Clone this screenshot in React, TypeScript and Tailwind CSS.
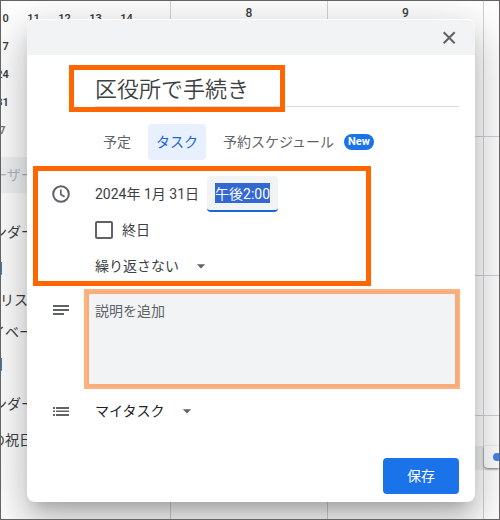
import { useEffect, useRef, useState } from 'react';
import { MdArrowDropDown } from 'react-icons/md';

const miniCalendar = [
  ['10', '11', '12', '13', '14'],
  ['17'],
  ['24'],
  ['31'],
  ['7'],
];

const sidebarItems = [
  { text: 'ンダー', className: '-ml-2 mt-[23px]' },
  { text: '日', className: '-ml-[11px] mt-1' },
  { text: 'リスト', className: '-ml-px' },
  { text: 'イベート', className: '-ml-2.5' },
  { text: '日', className: '-ml-[11px]' },
  { text: 'ンダー', className: '-ml-2 mt-2' },
  { text: 'の祝日', className: '-ml-2.5 mt-1' },
];

const tabs = [
  { id: 'event', label: '予定' },
  { id: 'task', label: 'タスク' },
  { id: 'schedule', label: '予約スケジュール', isNew: true },
];

// Dimmed calendar page behind the dialog
const CalendarBackdrop = () => (
  <div className="absolute inset-0 flex overflow-hidden bg-white">
    <aside className="w-[169px] shrink-0 overflow-hidden whitespace-nowrap">
      <div className="mt-1 -ml-[14px] text-[11px] font-semibold">
        {miniCalendar.map((week, i) => (
          <div key={i} className={`flex h-7 items-center ${i === 4 ? 'text-[#70757a]' : ''}`}>
            {week.map(day => <span key={day} className="w-[31px] shrink-0 text-center">{day}</span>)}
          </div>
        ))}
      </div>
      <div className="mt-3 flex h-9 items-center bg-[#f1f3f4] text-[#b4b6b9]">
        <span className="-ml-2">ーザーを検索</span>
      </div>
      {sidebarItems.map((item, i) => (
        <div key={i} className={`flex h-8 items-center ${item.className}`}>{item.text}</div>
      ))}
    </aside>
    <div className="relative flex flex-1 flex-col">
      <div className="absolute inset-0 flex text-xs font-medium">
        <div className="w-[157px] shrink-0 border-l border-[#d0d2d5] pt-1 text-center leading-4">8</div>
        <div className="w-[156px] shrink-0 border-l border-[#d0d2d5] pt-1 text-center leading-4">9</div>
        <div className="flex-1 border-l border-[#d0d2d5]" />
      </div>
      <div className="h-[136px] border-b border-[#d0d2d5]" />
      <div className="h-[139px] border-b border-[#d0d2d5]" />
      <div className="h-[140px] border-b border-[#d0d2d5]" />
      <div className="mt-[30px] flex h-6 justify-end bg-[#eeeff0]">
        <div className="relative flex h-[22px] w-[15px] items-center rounded-bl bg-white pl-[9px] shadow-sm shadow-black/40">
          <span className="size-2 shrink-0 rounded-full bg-[#4285f4]" />
        </div>
      </div>
    </div>
  </div>
);

const Dropdown = ({ label, options }: { label: string; options: string[] }) => (
  <div className="relative inline-flex items-center">
    <select aria-label={label} className="h-8 cursor-pointer appearance-none bg-transparent pr-8 outline-none">
      {options.map(o => <option key={o}>{o}</option>)}
    </select>
    <MdArrowDropDown className="pointer-events-none absolute right-0 size-5 text-[#5f6368]" />
  </div>
);

export default function App() {
  const [tab, setTab] = useState('task');
  const [title, setTitle] = useState('区役所で手続き');
  const [time, setTime] = useState('午後2:00');
  const [allDay, setAllDay] = useState(false);
  const timeRef = useRef<HTMLInputElement | null>(null);

  useEffect(() => {
    timeRef.current?.focus();
    timeRef.current?.select();
  }, []);

  return (
    <div className="relative flex min-h-screen flex-col overflow-hidden border border-[#666363] font-[Roboto,'Noto_Sans_CJK_JP',sans-serif] text-sm text-[#3c4043]">
      <CalendarBackdrop />

      <div
        role="dialog"
        aria-label="タスクを追加"
        className="relative mt-[18px] mr-6 mb-[17px] ml-[26px] rounded-lg bg-white shadow-[0_24px_38px_3px_rgba(0,0,0,0.14),0_9px_46px_8px_rgba(0,0,0,0.12),0_11px_15px_-7px_rgba(0,0,0,0.2)]"
      >
        <div className="flex h-9 items-center justify-end rounded-t-lg border-t border-white bg-[#f1f3f4] pr-4">
          <button type="button" aria-label="閉じる" className="text-[#5f6368]">
            <svg viewBox="0 0 20 20" className="size-5" fill="none" stroke="currentColor" strokeWidth="2">
              <path d="M4.7 4.2l11 11M15.7 4.2l-11 11" />
            </svg>
          </button>
        </div>

        <div className="relative mt-4 mr-4 ml-[68px]">
          <input
            aria-label="タイトル"
            value={title}
            onChange={e => setTitle(e.target.value)}
            className="block h-9 w-full border-b border-[#dadce0] pb-1 text-[22px] font-[350] outline-none"
          />
          <span className="pointer-events-none absolute -top-1.5 -left-[26px] h-[47px] w-[216px] border-5 border-[#ff6600]" />
        </div>

        <div role="tablist" className="mt-[17px] ml-[68px] flex gap-[9px] text-[#5f6368]">
          {tabs.map(t => (
            <button
              key={t.id}
              type="button"
              role="tab"
              aria-selected={tab === t.id}
              onClick={() => setTab(t.id)}
              className={`flex h-9 items-center gap-2.5 rounded px-2 whitespace-nowrap ${tab === t.id ? 'bg-[#e8f0fe] text-[#1967d2]' : ''}`}
            >
              {t.label}
              {t.isNew && <span className="rounded-full bg-[#1a73e8] px-1 text-[11px] leading-4 font-bold text-white">New</span>}
            </button>
          ))}
        </div>

        <div className="relative mt-4">
          <div className="flex h-9 items-center">
            <div className="w-[68px] shrink-0 pl-6">
              <svg viewBox="0 0 20 20" className="size-5" fill="none" stroke="#5f6368" strokeWidth="2">
                <circle cx="10" cy="10" r="7.8" />
                <path d="M9.8 5.5v5l3.8 2.3" strokeWidth="1.7" />
              </svg>
            </div>
            <button type="button" className="whitespace-nowrap">2024年 1月 31日</button>
            <input
              ref={timeRef}
              aria-label="開始時間"
              value={time}
              onChange={e => setTime(e.target.value)}
              className="ml-2 h-9 w-[71px] rounded border-b-2 border-[#1967d2] bg-[#f1f3f4] px-2 outline-none selection:bg-[#3367d1] selection:text-white"
            />
          </div>
          <label className="ml-[68px] flex h-9 w-fit items-center gap-[9px]">
            <input
              type="checkbox"
              checked={allDay}
              onChange={e => setAllDay(e.target.checked)}
              className="size-[18px] appearance-none rounded-xs border-2 border-[#5f6368] checked:bg-[#1a73e8]"
            />
            終日
          </label>
          <div className="ml-[68px] flex h-[35px] items-center">
            <Dropdown label="繰り返し" options={['繰り返さない']} />
          </div>
          <span className="pointer-events-none absolute -top-2.5 -bottom-[3px] left-1.5 w-[338px] border-5 border-[#ff6600]" />
        </div>

        <div className="mt-2 flex pr-4">
          <div className="w-[60px] shrink-0 pt-[9px] pl-6">
            <svg viewBox="0 0 20 20" className="size-5" fill="#5f6368">
              <path d="M2 5h16v2H2zM2 9h16v2H2zM2 13h11v2H2z" />
            </svg>
          </div>
          <div className="relative flex-1">
            <textarea
              aria-label="説明"
              placeholder="説明を追加"
              className="block h-24 w-full resize-none rounded bg-[#f1f3f4] px-2 py-2.5 leading-5 outline-none placeholder:text-[#5f6368]"
            />
            <span className="pointer-events-none absolute -top-0.5 -right-px -bottom-0.5 -left-[3px] border-5 border-[#ff6600]/50" />
          </div>
        </div>

        <div className="mt-1.5 flex h-9 items-center text-[#202124]">
          <div className="w-[68px] shrink-0 pl-6">
            <svg viewBox="0 0 20 20" className="size-5" fill="#5f6368">
              <path d="M2 6h2v2H2zM2 9.5h2v1.5H2zM2 13h2v2H2zM5 6h13v2H5zM5 9.5h13v1.5H5zM5 13h13v2H5z" />
            </svg>
          </div>
          <Dropdown label="リスト" options={['マイタスク']} />
        </div>

        <div className="mt-[29px] flex justify-end pr-4 pb-2">
          <button type="button" className="h-9 rounded bg-[#1a73e8] px-6 text-white">保存</button>
        </div>
      </div>
    </div>
  );
}
